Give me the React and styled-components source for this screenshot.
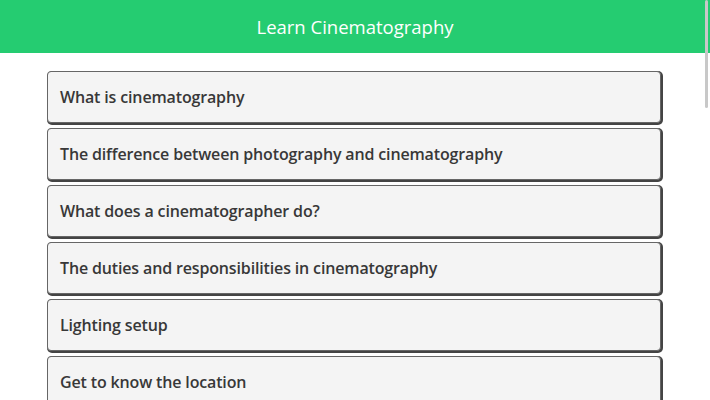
import React from "react";
import styled, { createGlobalStyle } from "styled-components";

const Global = createGlobalStyle`
  html, body { margin: 0; padding: 0; background: #fff; scrollbar-width: none; }
  html::-webkit-scrollbar { display: none; }
  body { font-family: "Open Sans", "Noto Sans", sans-serif; }
`;

const Header = styled.header`
  height: 53px;
  background: #25cc71;
  color: #fff;
  display: flex;
  align-items: center;
  justify-content: center;
  font-size: 18.5px;
  font-weight: 400;
`;

const List = styled.main`
  width: 614px;
  margin: 18px 0 0 47px;
  display: flex;
  flex-direction: column;
  gap: 5px;
`;

const Card = styled.div`
  height: 52px;
  box-sizing: border-box;
  border: 1px solid #666;
  border-radius: 4px;
  background: #f4f4f4;
  box-shadow: 1px 1px 0 1px #444;
  display: flex;
  align-items: center;
  padding-left: 12px;
  font-weight: 600;
  font-size: 16px;
  letter-spacing: -0.15px;
  color: #383838;
`;

const Thumb = styled.div`
  position: fixed;
  top: 0;
  right: 2px;
  width: 3px;
  height: 108px;
  border-radius: 2px;
  background: #c8c8c8;
`;

const items = [
  "What is cinematography",
  "The difference between photography and cinematography",
  "What does a cinematographer do?",
  "The duties and responsibilities in cinematography",
  "Lighting setup",
  "Get to know the location",
  "Camera angles",
  "Shot composition",
  "Camera movement",
  "Lenses",
];

export default function App() {
  return (
    <>
      <Global />
      <Header>Learn Cinematography</Header>
      <List>
        {items.map((t) => (
          <Card key={t}>{t}</Card>
        ))}
      </List>
      <Thumb />
    </>
  );
}
